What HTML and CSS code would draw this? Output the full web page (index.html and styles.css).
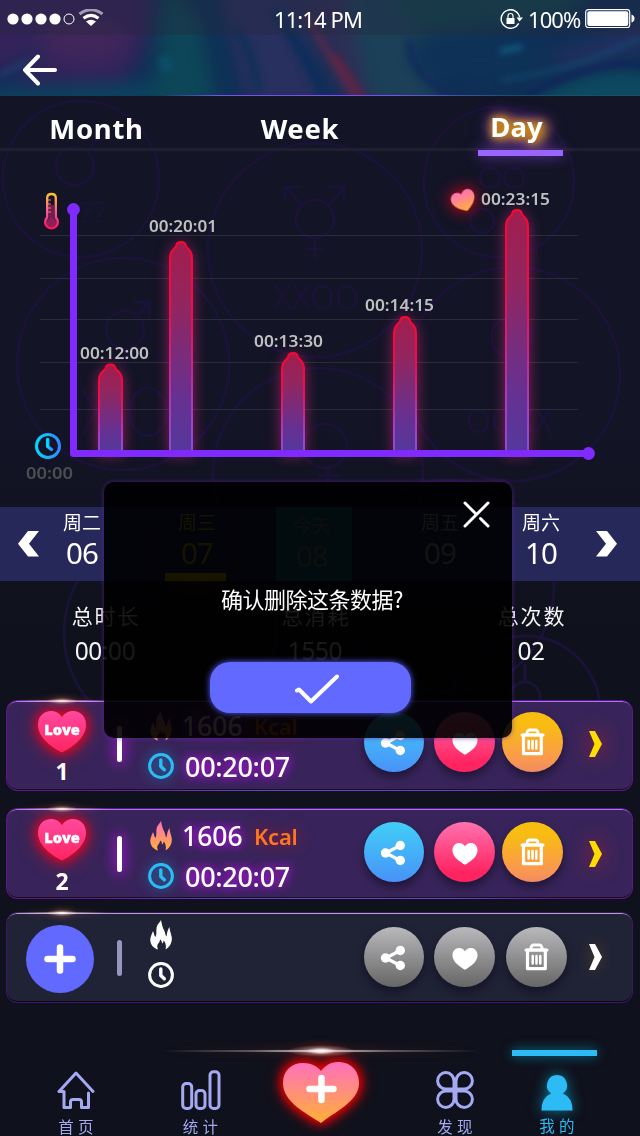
FILE: index.html
```html
<!DOCTYPE html>
<html lang="zh-CN">
<head>
<meta charset="utf-8">
<title>Day statistics</title>
<link rel="stylesheet" href="styles.css">
</head>
<body>
<svg class="defs" width="0" height="0" aria-hidden="true">
  <defs>
    <linearGradient id="pinkGrad" x1="0" y1="0" x2="0" y2="1"><stop offset="0" stop-color="#ff49a0"/><stop offset="1" stop-color="#ff2360"/></linearGradient>
    <linearGradient id="warmGrad" x1="0" y1="0" x2="0" y2="1"><stop offset="0" stop-color="#ff70bd"/><stop offset="1" stop-color="#ffb037"/></linearGradient>
    <symbol id="heart" viewBox="0 0 48 42"><path d="M24 41.500C15 37 0 27 0 14C0 5 6 0 13 0C18 0 22 2.500 24 6.500C26 2.500 30 0 35 0C42 0 48 5 48 14C48 27 33 37 24 41.500Z"/></symbol>
    <symbol id="flame" viewBox="0 0 22 30"><path d="M11 0C12 5 12.500 7 14 10C15.500 13 15 15 16.500 16.500C17 12 18 9 19.500 7C19.500 10 21 13 21.700 17C22.400 22 20 27 15.500 29.500C16.500 26 15.500 22 13.500 20.500C13.500 22 13 23 12 23.500C12 21 11 20 10 19.500C10 21 9 23 8 23.800C7 25 7 28 8 29.500C3 28 0 24 .3 19C.6 16 2 14 3 11C4 13 4 15 5.300 17C7 15 6 12 6.500 8C7.200 4 9.500 3 11 0Z"/></symbol>
    <symbol id="clock" viewBox="0 0 26 26"><g fill="none" stroke="currentColor" stroke-width="3"><circle cx="13" cy="13" r="11.400"/><path stroke-width="3.400" stroke-linecap="round" stroke-linejoin="round" d="M12.800 7V13.500L16.300 16.800"/></g></symbol>
    <symbol id="share" viewBox="0 0 26 26"><path d="M20 5.500L6 13L20 20.500" fill="none" stroke="#fff" stroke-width="3.200"/><g fill="#fff"><circle cx="5.500" cy="13" r="4.700"/><circle cx="20.300" cy="5.500" r="4.700"/><circle cx="20.300" cy="20.500" r="4.700"/></g></symbol>
    <symbol id="trash" viewBox="0 0 25 28"><g fill="none" stroke="#fff"><path stroke-width="3" stroke-linecap="round" d="M2 7H23"/><path stroke-width="3" d="M7 6C7 2.500 8 2 10 2H15C17 2 18 2.500 18 6"/><path stroke-width="3.200" stroke-linejoin="round" d="M3.500 7H21.300V25.700H3.500Z"/><path stroke-width="2.500" stroke-linecap="round" d="M8.700 13V20.500M12.500 13V20.500M16.300 13V20.500"/></g></symbol>
    <symbol id="next" viewBox="0 0 13 26"><path fill="currentColor" d="M0 0H6L13 13L6 26H0L5.500 13Z"/></symbol>
    <radialGradient id="flareGrad"><stop offset="0" stop-color="#fff"/><stop offset=".15" stop-color="#fff" stop-opacity=".85"/><stop offset=".5" stop-color="#fff" stop-opacity=".3"/><stop offset="1" stop-color="#fff" stop-opacity="0"/></radialGradient>
  </defs>
</svg>

<main class="app">
  <svg class="backdrop" viewBox="0 0 640 1136">
    <g class="rings">
      <circle cx="81" cy="179" r="78"/><circle cx="123" cy="364" r="106"/><circle cx="315" cy="250" r="107"/><circle cx="499" cy="182" r="75"/><circle cx="513" cy="374" r="107"/><circle cx="318" cy="473" r="105"/><circle cx="170" cy="633" r="106"/><circle cx="448" cy="586" r="106"/><circle cx="525" cy="711" r="75"/>
      <circle cx="75" cy="166" r="19"/><path d="M88 150L98 139"/>
      <circle cx="125" cy="330" r="19"/><path d="M138 316L148 302M134 302H149V318M125 350V366M117 358H133"/>
      <path d="M82 388L110 435M110 388L82 435"/><ellipse cx="148" cy="412" rx="18" ry="24"/>
      <circle cx="315" cy="219" r="19"/><path d="M302 205L286 188M285 200V187H302M329 205L344 188M328 187H344V202M315 238V260M306 249H324"/>
      <circle cx="325" cy="446" r="22"/><path d="M328 468V486M318 476H340"/>
      <circle cx="490" cy="178" r="10"/><circle cx="514" cy="178" r="10"/><circle cx="482" cy="221" r="12"/><circle cx="511" cy="337" r="20"/>
      <circle cx="525" cy="697" r="15"/><path d="M525 664V682"/>
    </g>
    <g class="ring-words"><text x="80" y="223" font-size="30">??</text><text x="273" y="309" font-size="32">XXOO</text><text x="466" y="433" font-size="32">OOXX</text></g>
  </svg>

  <header class="hero">
    <svg class="swirl" viewBox="0 0 640 96" preserveAspectRatio="none">
      <defs><filter id="soft" x="-30%" y="-60%" width="160%" height="220%" color-interpolation-filters="sRGB"><feGaussianBlur stdDeviation="9"/></filter><filter id="edge" x="-10%" y="-30%" width="120%" height="160%" color-interpolation-filters="sRGB"><feGaussianBlur stdDeviation="3"/></filter></defs>
      <rect width="640" height="96" fill="#0f2f55"/>
      <g filter="url(#soft)">
        <path d="M-30 -30H150Q160 50 120 82L-30 85Z" fill="#33235a"/><ellipse cx="85" cy="42" rx="45" ry="22" fill="#40265a"/>
        <path d="M-20 82L50 46L10 90Z" fill="#142c5c"/><path d="M-10 92L160 84L200 120H-10Z" fill="#0c4460"/>
        <path d="M165 -20L200 20L220 120H150Z" fill="#0d4658"/><path d="M215 -20L250 120H330L290 -20Z" fill="#27305e"/>
        <path d="M290 -20H340L380 120H350Z" fill="#2d2e56"/><path d="M340 -20H420L420 60L450 120H375Z" fill="#1b4058"/>
        <path d="M380 -20H600L560 20L420 35Z" fill="#10434f"/><ellipse cx="480" cy="60" rx="70" ry="22" fill="#0e3258"/><path d="M530 105Q590 60 660 76V120H520Z" fill="#0d4a60"/>
        <path d="M540 60L660 15V45L580 68Z" fill="#232f60"/>
      </g>
      <g filter="url(#edge)" fill="none">
        <path d="M205 -5Q220 20 228 98" stroke="#0c3359" stroke-width="9" opacity=".7"/><path d="M238 30Q252 50 258 92" stroke="#13305a" stroke-width="9"/><path d="M275 10Q305 55 328 100" stroke="#0f2d5a" stroke-width="12"/>
        <path d="M306 15Q328 55 356 100" stroke="#4f2a4d" stroke-width="8"/><path d="M335 55L364 100" stroke="#6d213f" stroke-width="6" opacity=".8"/>
        <path d="M410 40Q408 75 450 94" stroke="#112a5b" stroke-width="6"/><path d="M525 98Q566 75 600 68T645 68" stroke="#10205a" stroke-width="5"/><path d="M500 52L522 47" stroke="#115a80" stroke-width="6"/><path d="M500 81Q570 72 642 38" stroke="#134d74" stroke-width="3"/><path d="M0 76L28 62" stroke="#27587d" stroke-width="2"/><path d="M163 57L168 72" stroke="#0d5578" stroke-width="12" opacity=".6"/>
      </g>
    </svg>
    <div class="statusbar">
      <svg class="signal" width="98" height="20" viewBox="0 0 98 20"><g fill="#fff"><circle cx="6" cy="10" r="5.600"/><circle cx="20" cy="10" r="5.600"/><circle cx="34" cy="10" r="5.600"/><circle cx="48" cy="10" r="5.600"/></g><circle cx="62" cy="10" r="5" fill="none" stroke="#fff"/><g fill="none" stroke="#fff" stroke-width="3"><path opacity=".55" d="M72.500 5Q84-3.500 95.500 5"/><path d="M76.500 9.200Q84 3.500 91.500 9.200"/></g><path fill="#fff" d="M79 12.500Q84 9 89 12.500L84 17Z"/></svg>
      <span class="time">11:14 PM</span>
      <div class="power">
        <svg width="24" height="20" viewBox="0 0 24 20"><circle cx="10.500" cy="10" r="9.300" fill="none" stroke="#fff" stroke-width="1.400" stroke-dasharray="52 7" transform="rotate(28 10.500 10)"/><path fill="#fff" d="M6.500 9H14.500V15H6.500ZM16.500 8.500H23L19.500 12.500Z"/><path fill="none" stroke="#fff" stroke-width="1.200" d="M8 9V7Q8 4.500 10.500 4.500T13 7V9"/></svg>
        <span class="percent">100%</span>
        <svg width="50" height="20" viewBox="0 0 50 20"><rect x=".7" y=".7" width="44" height="17.800" rx="2.500" fill="none" stroke="#fff" stroke-width="1.200"/><rect x="2.300" y="2.300" width="41" height="14.800" rx="2" fill="#fff"/><path fill="#fff" d="M46.500 5.500Q49.500 6.500 49.500 9.500T46.500 13.500Z"/></svg>
      </div>
    </div>
    <div class="navbar"><svg width="36" height="32" viewBox="0 0 36 32"><path d="M16 2.500L3 16L16 29.500M3 16H33" fill="none" stroke="#fff" stroke-width="4" stroke-linecap="round" stroke-linejoin="round"/></svg></div>
  </header>

  <nav class="tabs"><span class="tab month">Month</span><span class="tab week">Week</span><span class="tab day">Day</span></nav>

  <section class="chart">
    <svg width="640" height="356" viewBox="0 151 640 356">
      <defs>
        <linearGradient id="barFill" x1="0" y1="0" x2="0" y2="1"><stop offset="0" stop-color="#a21d4e"/><stop offset=".3" stop-color="#92265f"/><stop offset=".75" stop-color="#653192"/><stop offset="1" stop-color="#55389c"/></linearGradient>
        <linearGradient id="barLine" x1="0" y1="0" x2="0" y2="1"><stop offset="0" stop-color="#ff0530"/><stop offset=".35" stop-color="#ef0c4c"/><stop offset=".8" stop-color="#a83bc4"/><stop offset="1" stop-color="#894be2"/></linearGradient>
        <linearGradient id="clockLine"><stop offset="0" stop-color="#00d9ff"/><stop offset="1" stop-color="#2d8cff"/></linearGradient>
        <linearGradient id="thermo" x1="0" y1="0" x2="0" y2="1"><stop offset="0" stop-color="#ffc02b"/><stop offset=".55" stop-color="#f7549b"/><stop offset="1" stop-color="#ff1459"/></linearGradient>
        <filter id="glow" x="-150%" y="-20%" width="400%" height="140%" color-interpolation-filters="sRGB"><feDropShadow dx="0" dy="2" stdDeviation="7" flood-color="#e0287c" flood-opacity=".6"/></filter>
        <filter id="redGlow" x="-150%" y="-150%" width="400%" height="400%" color-interpolation-filters="sRGB"><feDropShadow dx="0" dy="0" stdDeviation="8" flood-color="#ff0014"/></filter>
      </defs>
      <path class="grid" d="M40 235.500H578M40 278.500H578M40 319.500H578M40 362.500H578M40 409.500H578"/>
      <g class="bars">
        <path d="M99 452V381C99 374 102 372 105.500 369C106 363 115 363 115.500 369C119 372 122 374 122 381V452Z"/>
        <path d="M170 452V259C170 252 172.500 250 176 246.500C176.500 240.500 185.500 240.500 186 246.500C189.500 250 192 252 192 259V452Z"/>
        <path d="M282 452V370C282 363 284.500 361 288 357.500C288.500 351.500 297.500 351.500 298 357.500C301.500 361 304 363 304 370V452Z"/>
        <path d="M394 452V334C394 327 396.500 325 400 321.500C400.500 315.500 409.500 315.500 410 321.500C413.500 325 416 327 416 334V452Z"/>
        <path d="M506 452V227C506 220 508.500 218 512 214.500C512.500 208.500 521.500 208.500 522 214.500C525.500 218 528 220 528 227V452Z"/>
      </g>
      <path class="axis" d="M73.500 210V453.500H588"/><g fill="#812aff"><circle cx="73.500" cy="209.500" r="6.400"/><circle cx="588.500" cy="453.500" r="6.400"/></g>
      <g class="values">
        <text x="80" y="358.500" textLength="69" lengthAdjust="spacingAndGlyphs">00:12:00</text><text x="149" y="231.500" textLength="68" lengthAdjust="spacingAndGlyphs">00:20:01</text><text x="254" y="346.500" textLength="69" lengthAdjust="spacingAndGlyphs">00:13:30</text><text x="365" y="310.500" textLength="69" lengthAdjust="spacingAndGlyphs">00:14:15</text><text x="481" y="204.500" textLength="69" lengthAdjust="spacingAndGlyphs">00:23:15</text>
        <text class="origin" x="26" y="478.500" textLength="47" lengthAdjust="spacingAndGlyphs">00:00</text>
      </g>
      <g transform="translate(452 190.500) rotate(-20 12.500 11)" filter="url(#redGlow)"><use href="#heart" width="24" height="21" fill="url(#warmGrad)"/></g>
      <circle cx="51.500" cy="223" r="5" fill="#8f1e59"/><path fill="#8f1e59" opacity=".8" d="M49 205H54V223H49Z"/>
      <path fill="none" stroke="url(#thermo)" stroke-width="2.400" d="M47.200 198Q47.200 194 51.500 194T55.800 198V217.500A6.300 6.300 0 1 1 47.200 217.500Z"/><path stroke="#ff7488" d="M48 200H51M48 204H51M48 208H51M48 212H51"/>
      <g fill="none" stroke="url(#clockLine)" stroke-width="3"><circle cx="48" cy="446" r="11.500"/><path stroke-width="3.500" stroke-linecap="round" stroke-linejoin="round" d="M47.700 439.500V446.500L51.500 449.500"/></g>
    </svg>
  </section>

  <section class="dates">
    <svg width="21" height="26" viewBox="0 0 21 26"><path fill="#fff" d="M10 0H21L11 12.700L21 25.500H10L0 12.700Z"/></svg>
    <div class="date"><span class="dow">周二</span><span class="num">06</span></div>
    <div class="date marked"><span class="dow">周三</span><span class="num">07</span></div>
    <div class="date today"><span class="dow">今天</span><span class="num">08</span></div>
    <div class="date fri"><span class="dow">周五</span><span class="num">09</span></div>
    <div class="date"><span class="dow">周六</span><span class="num">10</span></div>
    <svg width="21" height="26" viewBox="0 0 21 26"><path fill="#fff" d="M11 0H0L10 12.700L0 25.500H11L21 12.700Z"/></svg>
  </section>

  <section class="totals">
    <div class="total"><span class="caption">总时长</span><span class="sum">00:00</span></div>
    <div class="total"><span class="caption">总消耗</span><span class="sum">1550</span></div>
    <div class="total"><span class="caption">总次数</span><span class="sum">02</span></div>
  </section>

  <section class="cards">
    <article class="card">
      <svg class="flare" width="110" height="8" viewBox="0 0 110 8"><ellipse cx="55" cy="4" rx="55" ry="1.200" fill="url(#flareGrad)"/><ellipse cx="55" cy="4" rx="16" ry="3.200" fill="url(#flareGrad)"/></svg>
      <div class="rank"><div class="love"><svg width="48" height="42"><use href="#heart" fill="url(#pinkGrad)"/></svg><b>Love</b></div><span class="place">1</span></div>
      <i class="divider"></i>
      <div class="metrics"><div class="metric"><svg class="flame" width="22" height="30"><use href="#flame" fill="url(#warmGrad)"/></svg><span class="kcal">1606</span><span class="unit">Kcal</span></div><div class="metric"><svg class="clock" width="26" height="26"><use href="#clock"/></svg><span class="duration">00:20:07</span></div></div>
      <div class="actions"><span class="round blue"><svg width="26" height="26"><use href="#share"/></svg></span><span class="round pink"><svg width="26" height="22"><use href="#heart" fill="#fff"/></svg></span><span class="round gold"><svg width="25" height="28"><use href="#trash"/></svg></span></div>
      <svg class="next" width="13" height="26"><use href="#next"/></svg>
    </article>
    <article class="card second">
      <svg class="flare" width="110" height="8" viewBox="0 0 110 8"><ellipse cx="55" cy="4" rx="55" ry="1.200" fill="url(#flareGrad)"/><ellipse cx="55" cy="4" rx="16" ry="3.200" fill="url(#flareGrad)"/></svg>
      <div class="rank"><div class="love"><svg width="48" height="42"><use href="#heart" fill="url(#pinkGrad)"/></svg><b>Love</b></div><span class="place">2</span></div>
      <i class="divider"></i>
      <div class="metrics"><div class="metric"><svg class="flame" width="22" height="30"><use href="#flame" fill="url(#warmGrad)"/></svg><span class="kcal">1606</span><span class="unit">Kcal</span></div><div class="metric"><svg class="clock" width="26" height="26"><use href="#clock"/></svg><span class="duration">00:20:07</span></div></div>
      <div class="actions"><span class="round blue"><svg width="26" height="26"><use href="#share"/></svg></span><span class="round pink"><svg width="26" height="22"><use href="#heart" fill="#fff"/></svg></span><span class="round gold"><svg width="25" height="28"><use href="#trash"/></svg></span></div>
      <svg class="next" width="13" height="26"><use href="#next"/></svg>
    </article>
    <article class="card empty">
      <svg class="flare" width="110" height="8" viewBox="0 0 110 8"><ellipse cx="55" cy="4" rx="55" ry="1.200" fill="url(#flareGrad)"/><ellipse cx="55" cy="4" rx="16" ry="3.200" fill="url(#flareGrad)"/></svg>
      <div class="rank"><span class="add"><svg width="32" height="30" viewBox="0 0 32 30"><path d="M3.500 15H28.500M16 3.500V26.500" stroke="#fff" stroke-width="6.500" stroke-linecap="round"/></svg></span></div>
      <i class="divider"></i>
      <div class="metrics"><div class="metric"><svg class="flame" width="22" height="30"><use href="#flame" fill="#fff"/></svg></div><div class="metric"><svg class="clock" width="26" height="26"><use href="#clock"/></svg></div></div>
      <div class="actions"><span class="round"><svg width="26" height="26"><use href="#share"/></svg></span><span class="round"><svg width="26" height="22"><use href="#heart" fill="#fff"/></svg></span><span class="round"><svg width="25" height="28"><use href="#trash"/></svg></span></div>
      <svg class="next" width="13" height="26"><use href="#next"/></svg>
    </article>
  </section>

  <nav class="bottom">
    <svg class="bigflare" width="340" height="24" viewBox="0 0 340 24"><ellipse cx="170" cy="12" rx="168" ry="1.700" fill="url(#flareGrad)"/><ellipse cx="170" cy="12" rx="34" ry="6" fill="url(#flareGrad)"/><ellipse cx="170" cy="12" rx="14" ry="4" fill="url(#flareGrad)"/></svg>
    <div class="item home"><svg width="38" height="40" viewBox="0 0 38 40"><path d="M2 21.500L19 3L36 21.500M2 21.500H7V37.500H13.500V32Q13.500 29.500 16 29.500H22Q24.500 29.500 24.500 32V37.500H31.500V23" fill="none" stroke="currentColor" stroke-width="3" stroke-linecap="round" stroke-linejoin="round"/></svg><span>首 页</span></div>
    <div class="item stats"><svg width="40" height="40" viewBox="0 0 40 40"><g fill="none" stroke="currentColor" stroke-width="3"><rect x="1.700" y="13.500" width="9" height="25" rx="3.500"/><rect x="15" y="20.500" width="9" height="18" rx="3.500"/><rect x="29" y="1.700" width="9" height="36.800" rx="3.500"/></g></svg><span>统 计</span></div>
    <div class="center"><svg width="76" height="62" viewBox="0 0 76 62"><path fill="url(#warmGrad)" d="M38 61C23 51 0 40 0 21C0 8 9 1 20 1C28 1 34 4 38 9C42 4 47 0 55 0C68 0 76 9 76 21C76 40 51 50 38 61Z"/><path d="M26.500 27H50.500M38.500 16V38" stroke="#fff" stroke-width="6.500" stroke-linecap="round"/></svg></div>
    <div class="item explore"><svg width="38" height="38" viewBox="0 0 38 38"><path d="M18 18H10A8.200 8.200 0 1 1 18 10ZM20 18V10A8.200 8.200 0 1 1 28 18ZM18 20V28A8.200 8.200 0 1 1 10 20ZM20 20H28A8.200 8.200 0 1 1 20 28Z" fill="none" stroke="currentColor" stroke-width="3"/></svg><span>发 现</span></div>
    <div class="item mine"><svg width="32" height="37" viewBox="0 0 32 37"><path fill="currentColor" d="M16 0A10.500 10.500 0 0 1 22 19Q32 23 32 36.500H0Q0 23 10 19A10.500 10.500 0 0 1 16 0Z"/></svg><span>我 的</span></div>
  </nav>

  <div class="dialog">
    <svg class="close" width="27" height="27" viewBox="0 0 27 27"><path d="M2 2L12 12M17.500 17.500L25 25M25 2L2 25" stroke="#fff" stroke-width="3" stroke-linecap="round"/></svg>
    <p class="message">确认删除这条数据?</p>
    <div class="confirm"><svg width="44" height="30" viewBox="0 0 44 30"><path d="M2 16.500L4 15.500L16 27.500L42 2.500" fill="none" stroke="#fff" stroke-width="4" stroke-linecap="round" stroke-linejoin="round"/></svg></div>
  </div>
</main>
</body>
</html>
```
FILE: styles.css
```css
* { box-sizing: border-box; }
body { margin: 0; background: #10111d; }
svg { display: block; flex: none; }
.defs { position: absolute; }
.app { position: relative; width: 640px; height: 1136px; overflow: hidden; background: linear-gradient(#131426 0, #131426 420px, #0f111c 640px, #0f111c 100%); color: #fff; font-family: "Noto Sans", "Noto Sans CJK SC", sans-serif; display: flex; flex-direction: column; }
.app > * { flex: none; position: relative; }
.app > .backdrop { position: absolute; left: 0; top: 0; width: 640px; height: 1136px; }
.rings { fill: none; stroke: #1b1237; stroke-width: 3; }
.ring-words { fill: #1b1237; font-family: "Open Sans", sans-serif; }

.hero { height: 96px; border-bottom: 1px solid; border-image: linear-gradient(90deg, #0d4058 25%, #7650f0 34%, #7650f0 62%, #15506d 80%) 1; }
.swirl { position: absolute; left: 0; top: 0; width: 640px; height: 95px; }
.statusbar { position: relative; height: 35px; padding: 2px 5px 0 7px; background: rgba(40, 40, 60, .35); display: grid; grid-template-columns: 220px 1fr auto; align-items: center; font-size: 22px; line-height: 30px; }
.time { text-align: left; padding-left: 47px; letter-spacing: -.9px; }
.power { display: flex; align-items: center; gap: 2px; }
.percent { width: 57px; padding-left: 2px; letter-spacing: -.9px; }
.navbar { position: relative; padding: 19px 22px; }

.tabs { height: 55px; border-bottom: 3px solid #1e2030; display: grid; grid-template-columns: 193px 214px 233px; font-size: 27.5px; font-weight: 700; line-height: 65px; text-align: center; }
.month { letter-spacing: .7px; }
.week { letter-spacing: .7px; }
.tab.day { width: 85px; height: 60px; margin-left: 71px; padding-right: 8px; line-height: 62px; border-bottom: 6px solid #9964ff; text-shadow: 0 0 7px #d89200, 0 0 12px #e89f00, 6px 1px 12px #d89200; filter: drop-shadow(0 0 7px rgba(137, 67, 240, .8)); }

.chart { height: 356px; }
.grid { fill: none; stroke: #2b2c39; }
.bars path { fill: url(#barFill); stroke: url(#barLine); stroke-width: 2; filter: url(#glow); }
.axis { fill: none; stroke: #812aff; stroke-width: 7; stroke-linejoin: round; }
.values { fill: #bfbfbf; font-size: 16px; font-weight: 600; }
.origin { fill: #4d4d52; }

.dates { height: 74px; background: #26285a; display: grid; grid-template-columns: 54px 66px 156px 76px 160px 58px 70px; align-items: center; justify-items: center; }
.dates > svg { margin-left: 2px; }
.date { height: 74px; display: flex; flex-direction: column; align-items: center; padding-top: 4px; }
.date:nth-child(2) { margin-right: 10px; }
.dow { font-size: 19px; line-height: 24px; }
.num { font-size: 29.5px; line-height: 36px; letter-spacing: -.8px; }
.marked { width: 61px; padding-left: 3px; color: #d8bf00; border-bottom: 8px solid #e8cf00; margin-right: 5px; box-shadow: 0 14px 22px -10px rgba(180, 20, 30, .6); }
.today { width: 76px; padding-top: 7px; padding-right: 4px; background: #17798c; color: #998e8a; }
.fri { padding-left: 16px; color: #bbb; }

.totals { height: 119px; padding-top: 20px; display: grid; grid-template-columns: 212px 208px 224px; color: #f4f4f4; }
.total { display: flex; flex-direction: column; align-items: center; gap: 3px; }
.caption { font-size: 21px; line-height: 30px; letter-spacing: 1.8px; }
.sum { font-size: 24.5px; line-height: 34px; letter-spacing: -.4px; padding-right: 2px; }

.cards { display: flex; flex-direction: column; height: 304px; padding: 0 7px 0 6px; }
.card { --shift: 0px; position: relative; height: 91px; margin-bottom: 17px; display: grid; grid-template-columns: 110px 6px 242px 210px 1fr; border: 1px solid #66128d; border-radius: 11px; background: #38245a; box-shadow: inset 0 2px 0 -1px #9b7be8, inset 0 -1px 0 #161022; }
.card::after { content: ""; position: absolute; left: 50px; right: 70px; bottom: -1px; height: 1px; background: linear-gradient(90deg, transparent, #6644c4 40%, #6644c4 80%, transparent); }
.card.second { --shift: 2px; margin-bottom: 13px; }
.flare { position: absolute; left: 0; top: -4px; filter: drop-shadow(0 0 3px #ff8060); }
.rank { padding-top: 10px; display: flex; flex-direction: column; align-items: center; }
.love { position: relative; width: 48px; height: 42px; filter: drop-shadow(0 0 6px #ff0018) drop-shadow(0 2px 8px rgba(255, 0, 24, .6)); }
.love b { position: absolute; inset: 0; font: 800 14.500px/38px "Open Sans", sans-serif; -webkit-text-stroke: .4px #fff; text-align: center; }
.place { font-size: 23px; line-height: 30px; font-weight: 700; margin-top: calc(3px + var(--shift)); }
.divider { width: 5px; height: 36px; margin-top: calc(25px + var(--shift)); border-radius: 3px; background: #fff; box-shadow: 0 0 13px 3px #8d18b5; }
.metrics { padding: calc(5px + var(--shift)) 0 0 25px; }
.metric { display: flex; align-items: center; height: 40px; }
.metric .flame { margin: 0 10px 0 2px; }
.metric .clock { color: #2dbbf5; margin-right: 11px; filter: drop-shadow(0 0 6px rgba(20, 160, 220, .7)); }
.kcal { width: 72px; font-size: 26.5px; font-weight: 500; letter-spacing: 0; text-shadow: 0 0 10px #a619d3, 0 0 12px #a619d3; }
.unit { font-size: 22px; font-weight: 600; color: #ff761c; letter-spacing: -.2px; text-shadow: 0 0 15px #a8203b; }
.duration { font-size: 27px; font-weight: 500; letter-spacing: -.3px; text-shadow: 0 0 10px #a619d3, 0 0 12px #a619d3; }
.actions { display: flex; gap: 9px; padding-top: calc(11px + var(--shift)); margin-left: -1px; }
.round { width: 60px; height: 60px; border-radius: 50%; display: flex; align-items: center; justify-content: center; background: linear-gradient(#b9b9bc, #666); box-shadow: 0 5px 8px rgba(15, 12, 30, .6); }
.round svg { margin: 2px 2px 0 0; }
.round:nth-child(2) { width: 61px; margin-left: 1px; }
.round:nth-child(2) svg { margin: 3px 0 0 1px; }
.round:nth-child(3) { width: 61px; margin-left: -2px; }
.round:nth-child(3) svg { margin: 0; }
.blue { background: linear-gradient(#41cff8, #4892f8); }
.pink { background: linear-gradient(#ff72ae, #ff2361 85%); }
.gold { background: linear-gradient(#f8bd10 20%, #fa9850 80%, #ef8c60); }
.next { color: #ffdc00; margin: calc(30px + var(--shift)) 0 0 14px; filter: drop-shadow(0 0 10px rgba(240, 30, 20, .75)); }
.card.empty { --shift: 3px; margin: 0; border-color: #421471; background: #202236; box-shadow: inset 0 2px 0 -1px #a8a8b0, inset 0 -1px 0 #08060f; }
.card.empty::after { display: none; }
.empty .rank { align-items: flex-start; padding: 12px 0 0 19px; }
.add { width: 68px; height: 68px; border-radius: 50%; background: #6169ff; display: flex; align-items: center; justify-content: center; }
.empty .divider { margin-top: 27px; background: #9496bd; box-shadow: none; }
.empty .metrics { padding-top: 2px; }
.empty .clock { color: #fff; filter: none; }
.empty .round:nth-child(3) { margin-left: 2px; }
.empty .next { color: #fff; margin-top: 31px; filter: drop-shadow(0 0 7px rgba(180, 130, 0, .35)); }

.bottom { height: 132px; padding-top: 66px; color: #a5a9f2; display: grid; grid-template-columns: 152px 97px 144px 124px 1fr; }
.bigflare { position: absolute; left: 151px; top: 35px; filter: drop-shadow(0 0 5px rgba(255, 60, 20, .8)); }
.item { display: flex; flex-direction: column; align-items: center; font: 15.5px/18px "Noto Sans CJK SC", sans-serif; }
.item svg { height: 40px; }
.item span { margin-top: 7px; letter-spacing: .3px; }
.center { padding-left: 34px; margin-top: -8px; filter: drop-shadow(0 0 6px #f00) drop-shadow(0 0 6px #d80000); }
.mine { position: relative; width: 85px; margin-left: -5px; padding-left: 5px; color: #2dbbf5; }
.mine svg { margin-top: 5px; height: 36px; filter: drop-shadow(0 0 7px #087c9d); }
.item.mine span { margin-top: 5px; }
.mine::before { content: ""; position: absolute; top: -20px; left: 0; width: 85px; height: 6px; background: #2dbbf5; box-shadow: 0 0 12px #087c9d; }

.app > .dialog { position: absolute; left: 104px; top: 482px; width: 408px; height: 256px; border-radius: 10px; background: rgba(0, 0, 0, .9); box-shadow: 0 0 5px rgba(100, 40, 160, .7); display: flex; flex-direction: column; align-items: center; }
.close { align-self: flex-end; margin: 19px 22px 0 0; }
.message { margin: 54px 0 0 8px; font: 22px/32px "Noto Sans CJK SC", sans-serif; letter-spacing: -.5px; }
.confirm { width: 201px; height: 51px; margin: 48px 0 0 5px; border-radius: 20px; background: #6169ff; box-shadow: 0 0 6px #5960ff; display: flex; align-items: center; justify-content: center; padding: 3px 0 0 13px; }
```
